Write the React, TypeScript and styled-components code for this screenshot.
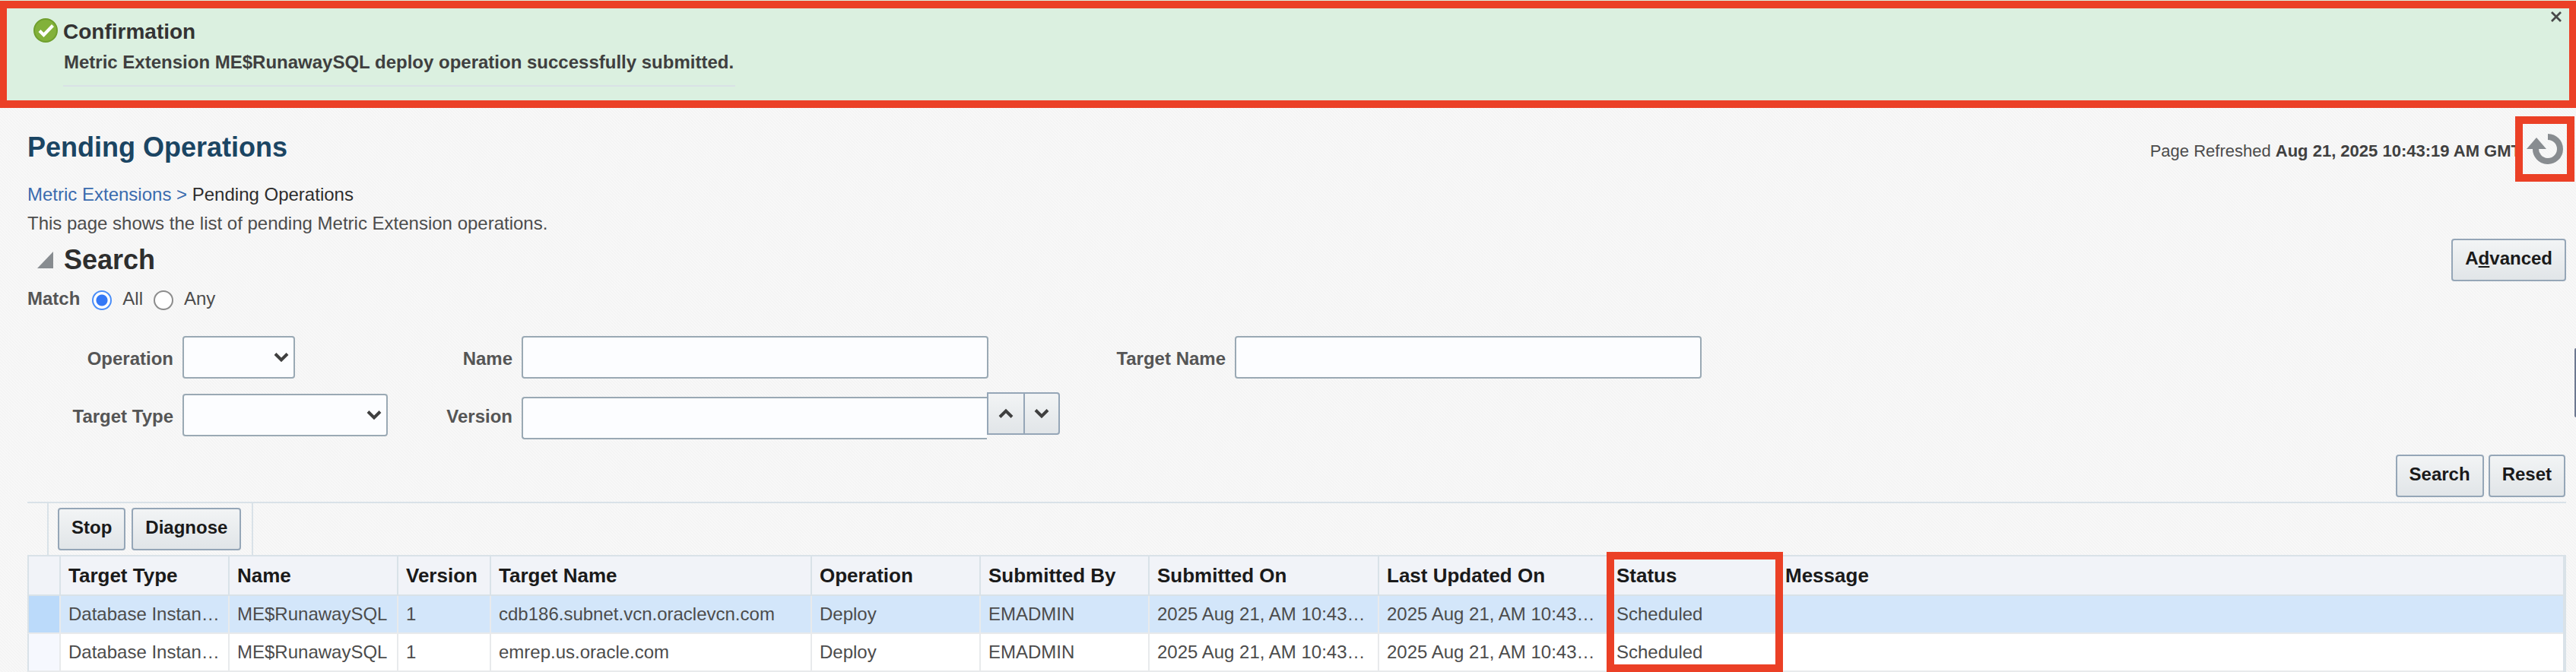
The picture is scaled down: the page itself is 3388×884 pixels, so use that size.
import React from "react";
import styled, { createGlobalStyle, css } from "styled-components";

const RED = "#eb4026";
const LINE = "#d9e2e8";

const GlobalStyle = createGlobalStyle`
  * { box-sizing: border-box; }
  body {
    margin: 0;
    color: #4c4c4c;
    font: 24px/34px "Liberation Sans", Arial, sans-serif;
    background: linear-gradient(45deg, #f8f8f8 25%, #f4f4f4 25% 50%, #f8f8f8 50% 75%, #f4f4f4 75%) 0 0 / 4px 4px;
  }
  h1, h2, p { margin: 0; }
  button, input, select { font: inherit; }
`;

const Page = styled.div`
  position: relative;
`;

/* Confirmation banner */

const Banner = styled.section`
  padding-top: 1px;
  background: #dbf0e0;
`;

const BannerFrame = styled.div`
  display: flex;
  justify-content: space-between;
  align-items: flex-start;
  border: solid ${RED};
  border-width: 10px 9px;
`;

const BannerBody = styled.div`
  display: grid;
  grid-template-columns: 32px auto;
  column-gap: 7px;
  padding: 13px 0 18px 35px;
`;

const BannerTitle = styled.h2`
  color: #333;
  font-size: 28px;
  line-height: 36px;
`;

const BannerMessage = styled.p`
  grid-column: 2;
  margin-top: 5px;
  padding: 0 2px 13px 1px;
  border-bottom: 2px solid #d9e2e6;
  color: #3f3f3f;
  font-weight: bold;
`;

const IconButton = styled.button`
  display: flex;
  padding: 0;
  border: 0;
  background: none;
`;

const CloseButton = styled(IconButton)`
  margin: 4px 10px 0 0;
`;

/* Page header */

const Header = styled.header`
  display: flex;
  align-items: center;
  padding: 11px 2px 0 36px;
`;

const HeaderText = styled.div`
  flex: 1;
  display: flex;
  justify-content: space-between;
  align-items: baseline;
  padding-bottom: 4px;
`;

const PageTitle = styled.h1`
  color: #1b4563;
  font-size: 36px;
  line-height: 44px;
`;

const Refreshed = styled.p`
  margin-right: -8px;
  font-size: 22px;
  white-space: nowrap;

  b { color: #404040; }
`;

const RefreshButton = styled(IconButton)`
  position: relative;
  width: 78px;
  height: 86px;
  align-items: center;
  justify-content: center;
  border: 10px solid ${RED};
`;

const Content = styled.main`
  padding: 0 13px 0 36px;
`;

const Breadcrumb = styled.nav`
  margin-bottom: 4px;
  color: #2d2d2d;

  a { color: #3a6bae; text-decoration: none; }
  span { color: #3a6bae; }
`;

/* Search panel */

const SearchHeader = styled.div`
  display: flex;
  justify-content: space-between;
  align-items: center;
  margin-top: 3px;
`;

const SearchTitle = styled.h2`
  display: flex;
  align-items: center;
  gap: 14px;
  padding-left: 13px;
  color: #2e2e2e;
  font-size: 36px;
  line-height: 44px;
`;

const Button = styled.button`
  height: 56px;
  padding: 0 16px 5px;
  border: 2px solid #95a6b7;
  border-radius: 4px;
  background: linear-gradient(#f2f4f5, #e1e5e8);
  color: #1a1a1a;
  font-weight: bold;
`;

const MatchGroup = styled.fieldset`
  display: flex;
  align-items: center;
  gap: 14px;
  margin: 6px 0 0;
  padding: 0;
  border: 0;

  label { display: flex; align-items: center; gap: 14px; }
`;

const MatchLegend = styled.span`
  margin-right: 2px;
  color: #555;
  font-weight: bold;
`;

const Radio = styled.input`
  appearance: none;
  width: 26px;
  height: 26px;
  margin: 4px 0 0;
  border: 2px solid #8c8c8c;
  border-radius: 50%;
  background: #fff;

  &:checked {
    border-color: #4a8df8;
    background: radial-gradient(circle, #3478f6 7px, #fff 8px);
  }
`;

const FormGrid = styled.div`
  display: grid;
  grid-template-columns: 192px 270px 152px 708px 206px 614px;
  gap: 20px 12px;
  align-items: start;
  margin-top: 32px;
`;

const Label = styled.label`
  height: 56px;
  color: #555;
  font-weight: bold;
  line-height: 60px;
  text-align: right;
`;

const fieldBox = css`
  height: 56px;
  border: 2px solid #9aa9b4;
  border-radius: 4px;
  background: #fcfdff;
`;

const TextInput = styled.input<{ $joined?: boolean }>`
  ${fieldBox}
  width: 614px;
  padding: 0 10px;
  ${(p) =>
    p.$joined &&
    css`
      width: 612px;
      margin-top: 6px;
      border-right: 0;
      border-radius: 4px 0 0 4px;
    `}
`;

const SelectWrap = styled.div<{ $width: number }>`
  display: grid;
  width: ${(p) => p.$width}px;
  align-items: center;

  > * { grid-area: 1 / 1; }
  svg { justify-self: end; margin-right: 8px; pointer-events: none; }
`;

const Select = styled.select`
  ${fieldBox}
  appearance: none;
  width: 100%;
  padding: 0 36px 0 10px;
`;

const SpinGroup = styled.div`
  display: flex;
  align-items: flex-start;
  margin-top: -2px;
`;

const SpinButton = styled(Button)<{ $last?: boolean }>`
  display: flex;
  align-items: center;
  justify-content: center;
  width: ${(p) => (p.$last ? 48 : 50)}px;
  margin-right: ${(p) => (p.$last ? 0 : -2)}px;
  padding: 0;
  border-radius: ${(p) => (p.$last ? "0 4px 4px 0" : "0")};
`;

const Actions = styled.div`
  display: flex;
  justify-content: flex-end;
  gap: 6px;
  margin: 20px 0 6px;
  padding-right: 1px;
`;

const EdgeHandle = styled.div`
  position: absolute;
  top: 458px;
  right: 0;
  width: 2px;
  height: 91px;
  border-radius: 2px 0 0 2px;
  background: #6d7890;
`;

/* Results */

const Toolbar = styled.div`
  display: flex;
  padding-left: 26px;
  border-top: 2px solid ${LINE};
`;

const ToolGroup = styled.div`
  display: flex;
  gap: 8px;
  padding: 6px 14px 6px 12px;
  border: solid ${LINE};
  border-width: 0 2px;
`;

const Table = styled.table`
  width: 100%;
  table-layout: fixed;
  border-spacing: 0;
  border-right: 4px solid ${LINE};

  th, td {
    padding: 0 10px;
    text-align: left;
    white-space: nowrap;
  }

  th {
    position: relative;
    height: 54px;
    border: solid ${LINE};
    border-width: 2px 0 2px 2px;
    background: #f1f3f8;
    color: #1a1a1a;
    font-size: 26px;
  }
`;

const Row = styled.tr<{ $selected?: boolean }>`
  td {
    height: 50px;
    border: solid #e8eaec;
    border-width: 0 0 2px 2px;
    background: ${(p) => (p.$selected ? "#d3e6fa" : "#fff")};
  }
  td:first-child {
    border-left-color: ${LINE};
    background: ${(p) => (p.$selected ? "#bbdafa" : "#f6f8fe")};
  }
`;

const StatusFrame = styled.div`
  position: absolute;
  z-index: 1;
  top: -6px;
  left: -3px;
  width: 232px;
  height: 158px;
  border: 10px solid ${RED};
  pointer-events: none;
`;

const columns: [string, number?][] = [
  ["", 42],
  ["Target Type", 222],
  ["Name", 222],
  ["Version", 122],
  ["Target Name", 422],
  ["Operation", 222],
  ["Submitted By", 222],
  ["Submitted On", 302],
  ["Last Updated On", 302],
  ["Status", 222],
  ["Message"],
];

const makeRow = (target: string) => [
  "",
  "Database Instan…",
  "ME$RunawaySQL",
  "1",
  target,
  "Deploy",
  "EMADMIN",
  "2025 Aug 21, AM 10:43…",
  "2025 Aug 21, AM 10:43…",
  "Scheduled",
  "",
];

const rows = [makeRow("cdb186.subnet.vcn.oraclevcn.com"), makeRow("emrep.us.oracle.com")];

const CheckIcon = () => (
  <svg width="32" height="32" viewBox="0 0 32 32" aria-hidden="true">
    <circle cx="16" cy="16" r="15" fill="#82b13a" stroke="#6f9f2d" strokeWidth="2" />
    <path d="M8 16.5 L13.5 22 L25.5 9.5" fill="none" stroke="#fff" strokeWidth="4.2" />
  </svg>
);

const CloseIcon = () => (
  <svg width="14" height="14" viewBox="0 0 14 14" aria-hidden="true">
    <path d="M1 1 L13 13 M13 1 L1 13" stroke="#484848" strokeWidth="2.8" />
  </svg>
);

const RefreshIcon = () => (
  <svg width="48" height="42" viewBox="0 0 48 42" aria-hidden="true">
    <path d="M28 5 A16 16 0 1 1 12 20" fill="none" stroke="#888c90" strokeWidth="8" />
    <path d="M0 21 L13 6 L26 21 Z" fill="#888c90" />
  </svg>
);

const Chevron = ({ up }: { up?: boolean }) => (
  <svg width="20" height="14" viewBox="0 0 20 14" aria-hidden="true">
    <path
      d={up ? "M2 11.5 L10 3.5 L18 11.5" : "M2 2.5 L10 10.5 L18 2.5"}
      fill="none"
      stroke="#3f3f3f"
      strokeWidth="4"
    />
  </svg>
);

const SelectField = ({ id, width }: { id: string; width: number }) => (
  <SelectWrap $width={width}>
    <Select id={id} />
    <Chevron />
  </SelectWrap>
);

export default function App() {
  return (
    <Page>
      <GlobalStyle />
      <Banner>
        <BannerFrame>
          <BannerBody>
            <CheckIcon />
            <BannerTitle>Confirmation</BannerTitle>
            <BannerMessage>
              Metric Extension ME$RunawaySQL deploy operation successfully submitted.
            </BannerMessage>
          </BannerBody>
          <CloseButton type="button" aria-label="Close">
            <CloseIcon />
          </CloseButton>
        </BannerFrame>
      </Banner>

      <Header>
        <HeaderText>
          <PageTitle>Pending Operations</PageTitle>
          <Refreshed>
            Page Refreshed <b>Aug 21, 2025 10:43:19 AM GMT</b>
          </Refreshed>
        </HeaderText>
        <RefreshButton type="button" aria-label="Refresh">
          <RefreshIcon />
        </RefreshButton>
      </Header>

      <Content>
        <Breadcrumb>
          <a href="#metric-extensions">Metric Extensions</a> <span>&gt;</span> Pending Operations
        </Breadcrumb>
        <p>This page shows the list of pending Metric Extension operations.</p>

        <SearchHeader>
          <SearchTitle>
            <IconButton type="button" aria-label="Collapse search">
              <svg width="21" height="22" viewBox="0 0 21 22" aria-hidden="true">
                <path d="M21 0 V22 H0 Z" fill="#888c90" />
              </svg>
            </IconButton>
            Search
          </SearchTitle>
          <Button type="button">
            A<u>d</u>vanced
          </Button>
        </SearchHeader>

        <MatchGroup>
          <MatchLegend>Match</MatchLegend>
          <label>
            <Radio type="radio" name="match" defaultChecked /> All
          </label>
          <label>
            <Radio type="radio" name="match" /> Any
          </label>
        </MatchGroup>

        <FormGrid>
          <Label htmlFor="operation">Operation</Label>
          <SelectField id="operation" width={148} />
          <Label htmlFor="name">Name</Label>
          <TextInput id="name" />
          <Label htmlFor="target-name">Target Name</Label>
          <TextInput id="target-name" />
          <Label htmlFor="target-type">Target Type</Label>
          <SelectField id="target-type" width={270} />
          <Label htmlFor="version">Version</Label>
          <SpinGroup>
            <TextInput id="version" $joined />
            <SpinButton type="button" aria-label="Increase">
              <Chevron up />
            </SpinButton>
            <SpinButton type="button" aria-label="Decrease" $last>
              <Chevron />
            </SpinButton>
          </SpinGroup>
        </FormGrid>

        <Actions>
          <Button type="button">Search</Button>
          <Button type="button">Reset</Button>
        </Actions>

        <Toolbar>
          <ToolGroup>
            <Button type="button">Stop</Button>
            <Button type="button">Diagnose</Button>
          </ToolGroup>
        </Toolbar>

        <Table>
          <colgroup>
            {columns.map(([name, width]) => (
              <col key={name} width={width} />
            ))}
          </colgroup>
          <thead>
            <tr>
              {columns.map(([name]) => (
                <th key={name} scope="col">
                  {name}
                  {name === "Status" && <StatusFrame />}
                </th>
              ))}
            </tr>
          </thead>
          <tbody>
            {rows.map((cells, r) => (
              <Row key={r} $selected={r === 0}>
                {cells.map((cell, c) => (
                  <td key={c}>{cell}</td>
                ))}
              </Row>
            ))}
          </tbody>
        </Table>
      </Content>
      <EdgeHandle />
    </Page>
  );
}
